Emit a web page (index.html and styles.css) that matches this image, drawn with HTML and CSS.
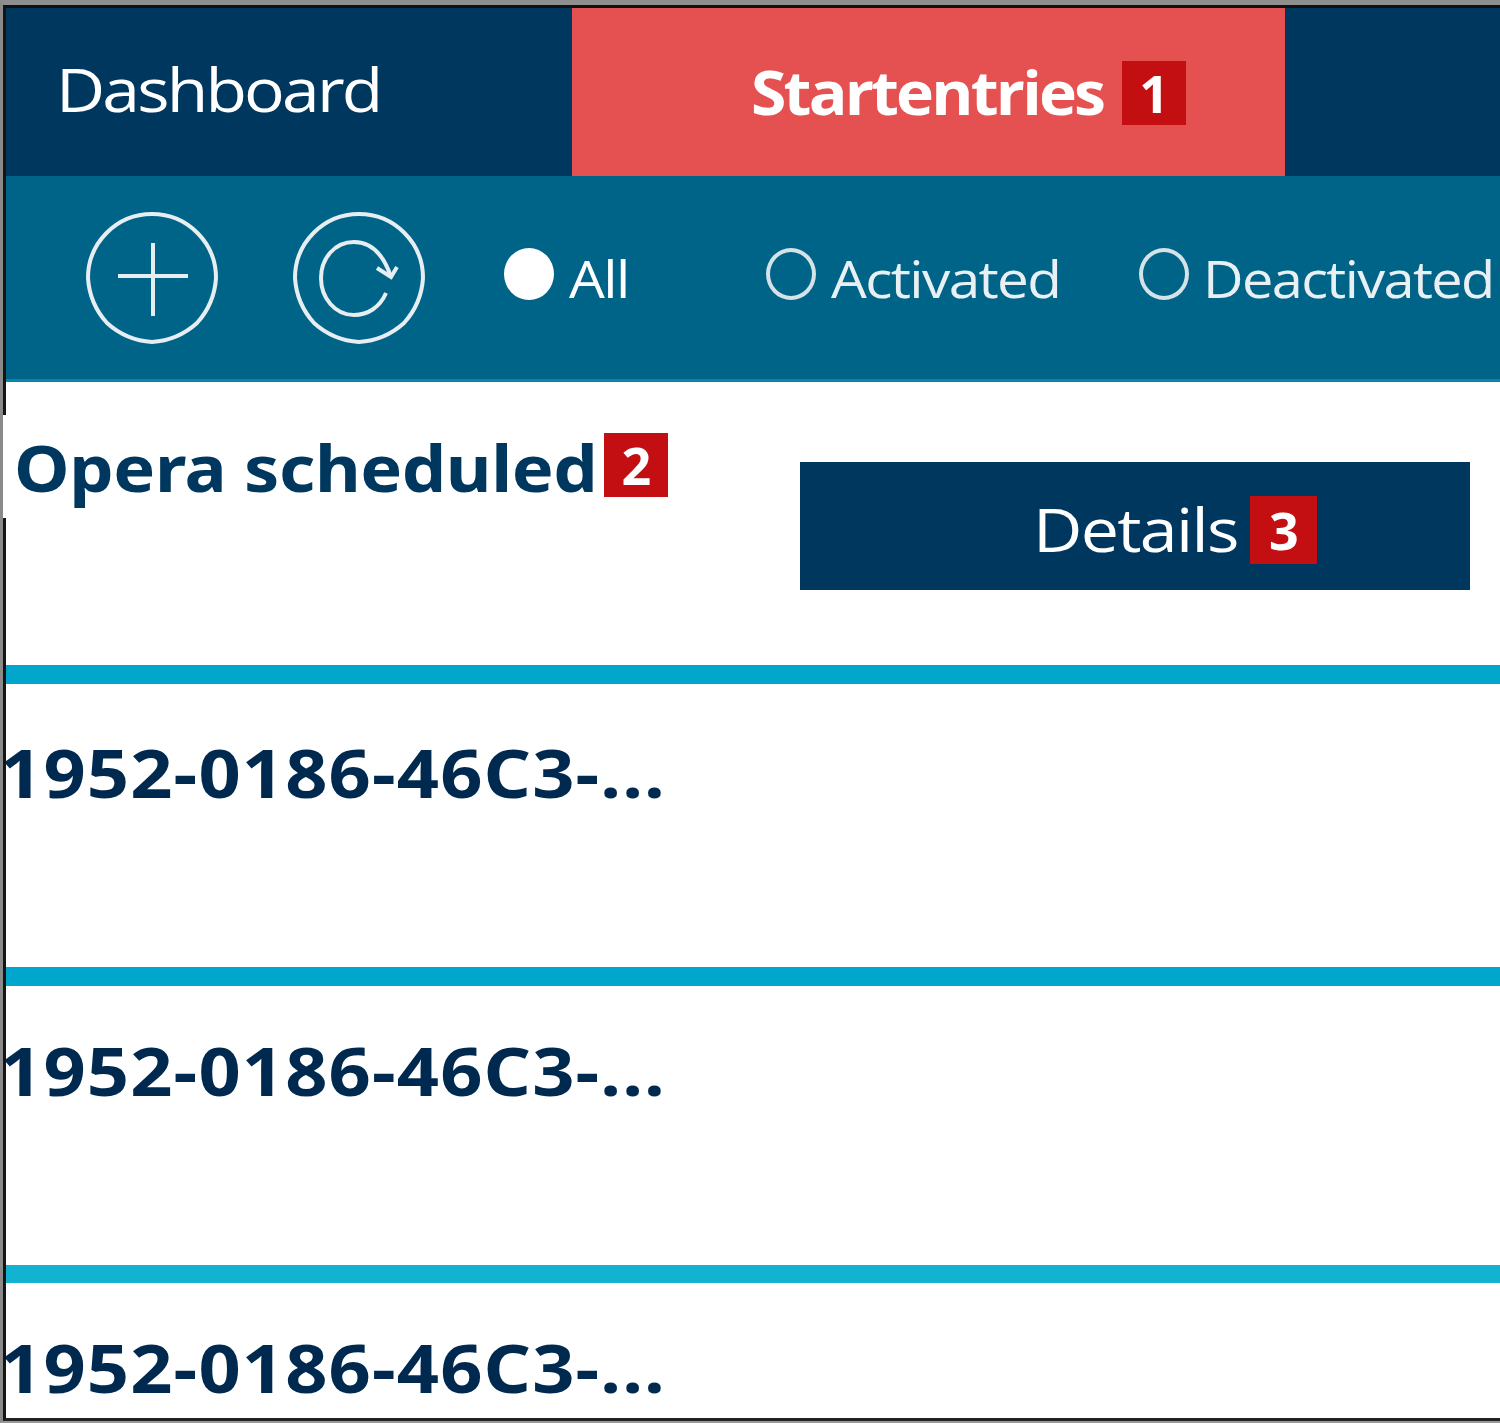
FILE: index.html
```html
<!DOCTYPE html>
<html lang="en">
<head>
<meta charset="utf-8">
<title>Startentries</title>
<link rel="stylesheet" href="styles.css">
</head>
<body>
<div class="window">
<div class="frame">
  <nav class="tabs">
    <div class="tab tab-dash"><span class="label label-dash">Dashboard</span></div>
    <div class="tab tab-active"><span class="label label-start">Startentries</span><span class="badge badge-tab">1</span></div>
    <div class="tab-rest"></div>
  </nav>
  <div class="toolbar">
    <svg class="icon icon-add" viewBox="0 0 134 134" aria-hidden="true">
      <path d="M67 3 A64 64 0 0 1 131 67 A74 74 0 0 1 112 112 A74 74 0 0 1 67 131 A74 74 0 0 1 22 112 A74 74 0 0 1 3 67 A64 64 0 0 1 67 3 Z"/>
      <path d="M33 65 H103 M68 32 V105"/>
    </svg>
    <svg class="icon icon-refresh" viewBox="0 0 134 134" aria-hidden="true">
      <path d="M67 3 A64 64 0 0 1 131 67 A74 74 0 0 1 112 112 A74 74 0 0 1 67 131 A74 74 0 0 1 22 112 A74 74 0 0 1 3 67 A64 64 0 0 1 67 3 Z"/>
      <path d="M94 82 C88 96 76 104 62 104 C43 104 29 87 29 67 C29 47 43 31 62 31 C80 31 92 45 99 66"/>
      <path d="M85 57 L99 66 L105 56"/>
    </svg>
    <label class="radio radio-all"><span class="dot dot-on"></span><span class="label label-radio">All</span></label>
    <label class="radio radio-activated"><span class="dot"></span><span class="label label-radio">Activated</span></label>
    <label class="radio radio-deactivated"><span class="dot dot-tight"></span><span class="label label-radio label-deact">Deactivated</span></label>
  </div>
  <section class="row row-head">
    <div class="row-title"><span class="label label-title">Opera scheduled</span><span class="badge badge-title">2</span></div>
    <button class="details"><span class="label label-details">Details</span><span class="badge badge-details">3</span></button>
  </section>
  <div class="rule"></div>
  <section class="row row-id"><div class="id-text">1952-0186-46C3-...</div></section>
  <div class="rule"></div>
  <section class="row row-id row-id-2"><div class="id-text">1952-0186-46C3-...</div></section>
  <div class="rule rule-last"></div>
  <section class="row row-id row-id-3"><div class="id-text">1952-0186-46C3-...</div></section>
</div>
</div>
</body>
</html>
```
FILE: styles.css
```css
* { box-sizing: border-box; }
html, body { margin: 0; padding: 0; background: #fff; }
body { width: 1500px; height: 1423px; overflow: hidden; font-family: "Open Sans", "Noto Sans", sans-serif; }
.window {
  width: 1500px; height: 1423px; overflow: hidden;
  border-top: 5px solid #8f8f8f;
  border-left: 3px solid #8a8a8a;
  border-bottom: 2px solid #999;
}
.frame {
  height: 1416px;
  border-top: 3px solid #111;
  border-left: 3px solid #151515;
  border-bottom: 3px solid #222;
}
.label { display: inline-block; transform-origin: left center; white-space: nowrap; }
.tabs { display: flex; height: 168px; background: #00375e; color: #fff; }
.tab { display: flex; align-items: center; height: 168px; }
.tab-dash { width: 566px; padding-left: 50px; padding-bottom: 6px; font-size: 60px; font-weight: 500; letter-spacing: -2.5px; }
.label-dash { transform: scaleX(1.13); }
.tab-active { width: 713px; padding-left: 179px; background: #e55151; font-size: 60px; font-weight: 700; letter-spacing: -2.6px; }
.label-start { transform: scaleX(1.07); }
.tab-rest { flex: 1; }
.badge {
  display: inline-flex; align-items: center; justify-content: center;
  width: 64px; height: 64px; background: #c30f12; color: #fff;
  font-family: "Noto Sans", sans-serif; font-weight: 700; font-size: 52px; letter-spacing: 0; line-height: 1;
}
.badge-tab { margin-left: 42px; margin-top: 2px; }
.toolbar { display: flex; align-items: flex-start; height: 206px; background: #006488; color: #fff; border-bottom: 3px solid #0a86aa; }
.icon { width: 134px; height: 134px; margin-top: 35px; fill: none; stroke: #e6eef2; stroke-width: 4; flex: none; }
.icon-add { margin-left: 79px; }
.icon-refresh { margin-left: 73px; }
.radio { display: flex; align-items: center; height: 60px; margin-top: 71px; font-size: 52px; font-weight: 500; letter-spacing: -1.5px; color: #e9f0f3; }
.label-radio { transform: scaleX(1.09); }
.label-deact { transform: scaleX(1.075); }
.dot { width: 50px; height: 52px; margin-right: 15px; margin-top: -6px; border: 4px solid #d5e3e9; border-radius: 50%; flex: none; }
.dot-on { background: #fff; border-color: #fff; }
.dot-tight { margin-right: 14px; }
.radio-all { margin-left: 78px; color: #fff; }
.radio-activated { margin-left: 142px; }
.radio-deactivated { margin-left: 98px; }
.row { position: relative; }
.row-head { display: flex; align-items: flex-start; height: 283px; background: #fff; }
.row-head::before { content: ""; position: absolute; left: -3px; top: 33px; width: 3px; height: 103px; background: #fff; }
.row-title { display: flex; align-items: flex-start; width: 794px; padding: 51px 0 0 8px; color: #00375e; font-family: "Noto Sans", sans-serif; font-size: 64px; font-weight: 700; letter-spacing: -0.4px; line-height: 70px; }
.label-title { transform: scaleX(1.1); }
.badge-title { margin-left: 60px; }
.details {
  display: flex; align-items: center; justify-content: flex-start;
  width: 670px; height: 128px; margin-top: 80px; padding: 6px 0 0 233px;
  border: 0; background: #00375e; color: #fff; font-family: "Open Sans", sans-serif; font-size: 60px; font-weight: 500; letter-spacing: -1.5px;
}
.label-details { transform: scaleX(1.135); }
.badge-details { width: 67px; height: 68px; margin-left: 37px; margin-top: 2px; }
.rule { height: 19px; background: #00a6cb; }
.rule-last { height: 18px; background: #12b2d0; }
.row-id { height: 283px; padding-top: 48px; overflow: hidden; }
.row-id-2 { height: 279px; padding-top: 44px; }
.row-id-3 { height: 140px; padding-top: 44px; }
.id-text { margin-left: -6px; color: #00294f; font-family: "Noto Sans", sans-serif; font-size: 66px; font-weight: 700; line-height: 80px; letter-spacing: 1px; white-space: nowrap; transform: scaleX(1.12); transform-origin: left center; }
```
